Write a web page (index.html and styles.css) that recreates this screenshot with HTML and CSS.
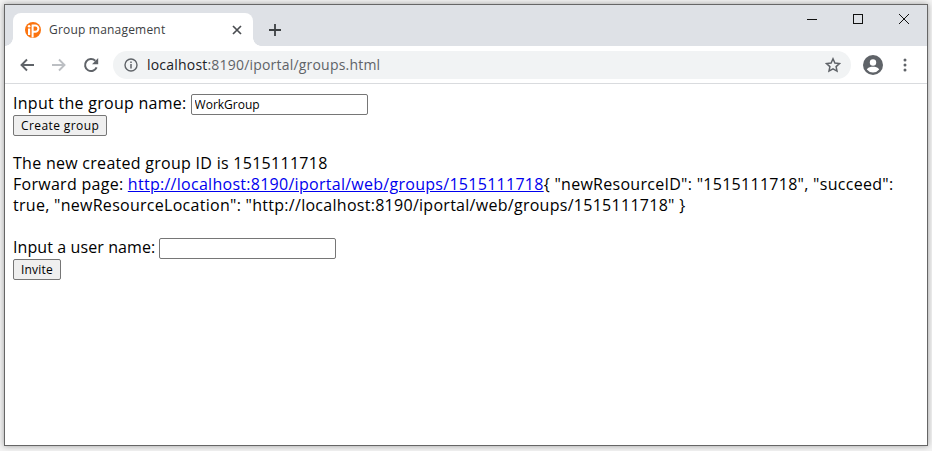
FILE: index.html
```html
<!DOCTYPE html>
<html lang="en">
<head>
<meta charset="utf-8">
<title>Group management</title>
<link rel="stylesheet" href="styles.css">
</head>
<body>
<div class="window">
  <div class="titlebar">
    <div class="tab">
      <svg class="favicon" width="16" height="16" viewBox="0 0 16 16"><circle cx="8" cy="8" r="8" fill="#fb7410"/><rect x="3" y="6.500" width="2.200" height="6.500" fill="#fff"/><circle cx="4.100" cy="4.200" r="1.300" fill="#fff"/><path d="M7.600 15.500V3.400h2.600a3.200 3.200 0 0 1 0 6.400H8.600" fill="none" stroke="#fff" stroke-width="2"/></svg>
      <span class="tab-title">Group management</span>
      <svg class="tab-close" width="10" height="10" viewBox="0 0 10 10"><path d="M1 1l8 8M9 1L1 9" stroke="#4a4d51" stroke-width="1.700"/></svg>
    </div>
    <svg class="new-tab" width="12" height="12" viewBox="0 0 12 12"><path d="M6 0v12M0 6h12" stroke="#3c4043" stroke-width="1.800"/></svg>
    <div class="win-controls">
      <span class="win-btn"><svg width="10" height="10" viewBox="0 0 10 10"><path d="M0 5.500h10" stroke="#111" stroke-width="1"/></svg></span>
      <span class="win-btn"><svg width="10" height="10" viewBox="0 0 10 10"><rect x=".5" y=".5" width="9" height="9" fill="none" stroke="#111"/></svg></span>
      <span class="win-btn"><svg width="10" height="10" viewBox="0 0 10 10"><path d="M0 0l10 10M10 0L0 10" stroke="#111" stroke-width="1"/></svg></span>
    </div>
  </div>
  <div class="toolbar">
    <svg class="nav" width="16" height="16" viewBox="0 0 16 16"><path d="M15 8H2.500M8 2.500L2.500 8 8 13.500" fill="none" stroke="#5f6368" stroke-width="1.900"/></svg>
    <svg class="nav" width="16" height="16" viewBox="0 0 16 16"><path d="M1 8h12.500M8 2.500L13.500 8 8 13.500" fill="none" stroke="#bcbfc3" stroke-width="1.900"/></svg>
    <svg class="nav" width="16" height="16" viewBox="0 0 16 16"><path d="M13.600 10.400A6 6 0 1 1 12.300 3.800" fill="none" stroke="#5f6368" stroke-width="2"/><path d="M15.200 1v6.200H9z" fill="#5f6368"/></svg>
    <div class="omnibox">
      <svg width="14" height="14" viewBox="0 0 14 14"><circle cx="7" cy="7" r="6" fill="none" stroke="#5f6368" stroke-width="1.400"/><path d="M7 6v4.400" stroke="#5f6368" stroke-width="1.500"/><path d="M7 3.400v1.500" stroke="#5f6368" stroke-width="1.500"/></svg>
      <span class="url"><span class="host">localhost</span>:8190/iportal/groups.html</span>
      <svg class="star" width="16" height="16" viewBox="0 0 16 16"><path d="M8 1.800l1.900 4.200 4.600.5-3.400 3.100.9 4.500L8 11.800l-4 2.300.9-4.500L1.500 6.500l4.600-.5z" fill="none" stroke="#5f6368" stroke-width="1.500"/></svg>
    </div>
    <svg class="avatar" width="20" height="20" viewBox="0 0 20 20"><circle cx="10" cy="10" r="10" fill="#5f6368"/><circle cx="10" cy="7.500" r="3.200" fill="#fff"/><path d="M3.800 14.500C5 12.300 8 11.800 10 11.800s5 .5 6.200 2.700A8 8 0 0 1 10 17.500a8 8 0 0 1-6.200-3z" fill="#fff"/></svg>
    <svg class="menu" width="4" height="14" viewBox="0 0 4 14"><circle cx="2" cy="2" r="1.500" fill="#5f6368"/><circle cx="2" cy="7" r="1.500" fill="#5f6368"/><circle cx="2" cy="12" r="1.500" fill="#5f6368"/></svg>
  </div>
  <main class="page">
    <div class="field"><label for="g">Input the group name:</label> <input id="g" class="text-input" type="text" value="WorkGroup"></div>
    <button class="btn" type="button">Create group</button>
    <p class="result">The new created group ID is 1515111718<br>Forward page: <a href="#">http://localhost:8190/iportal/web/groups/1515111718</a>{ "newResourceID": "1515111718", "succeed": true, "newResourceLocation": "http://localhost:8190/iportal/web/groups/1515111718" }</p>
    <div class="field field-tight"><label for="u">Input a user name:</label> <input id="u" class="text-input" type="text"></div>
    <button class="btn btn-tight" type="button">Invite</button>
  </main>
</div>
</body>
</html>
```
FILE: styles.css
```css
* { box-sizing: border-box; }
html, body { height: 100%; }
body {
  margin: 0;
  padding: 4px 4px 5px;
  background: #f3f3f3;
  font-family: "Open Sans", "Liberation Sans", sans-serif;
}
.window {
  height: 442px;
  border: 1px solid #666;
  background: #fff;
  display: flex;
  flex-direction: column;
  overflow: hidden;
  box-shadow: 0 0 6px rgba(0,0,0,.35);
}
.titlebar {
  height: 41px;
  flex: none;
  background: #dee1e6;
  display: flex;
  align-items: flex-end;
  padding-left: 8px;
}
.tab {
  position: relative;
  width: 240px;
  height: 33px;
  background: #fff;
  border-radius: 8px 8px 0 0;
  display: flex;
  align-items: center;
  padding: 0 12px;
}
.tab::before,
.tab::after {
  content: "";
  position: absolute;
  bottom: 0;
  width: 8px;
  height: 8px;
}
.tab::before {
  left: -8px;
  background: radial-gradient(circle at 0 0, #dee1e6 7.500px, #fff 8px);
}
.tab::after {
  right: -8px;
  background: radial-gradient(circle at 100% 0, #dee1e6 7.500px, #fff 8px);
}
.favicon { flex: none; }
.tab-title {
  margin-left: 8px;
  font-size: 12px;
  letter-spacing: .2px;
  color: #3c4043;
  flex: 1;
}
.tab-close { flex: none; margin-right: -1px; }
.new-tab { margin: 0 0 10px 16px; }
.win-controls {
  margin-left: auto;
  align-self: flex-start;
  display: flex;
}
.win-btn {
  width: 46px;
  height: 28px;
  display: flex;
  align-items: center;
  justify-content: center;
}
.toolbar {
  height: 38px;
  flex: none;
  background: #fff;
  border-bottom: 1px solid #d9dbde;
  display: flex;
  align-items: center;
  padding-left: 14px;
}
.nav { flex: none; margin-right: 16px; }
.omnibox {
  width: 738px;
  height: 28px;
  margin-left: -2px;
  border-radius: 14px;
  background: #f1f3f4;
  display: flex;
  align-items: center;
  padding: 0 10px 0 11px;
}
.url {
  margin-left: 9px;
  flex: 1;
  font-size: 14px;
  letter-spacing: .2px;
  color: #5f6368;
}
.host { color: #202124; }
.avatar { flex: none; margin-left: 12px; }
.menu { flex: none; margin-left: 20px; }
.page {
  flex: 1;
  padding: 8px;
  font-size: 16px;
  line-height: 21px;
  letter-spacing: .28px;
  color: #000;
}
.field { height: 23px; display: flex; align-items: flex-end; gap: 4px; }
.field label { align-self: center; }
.field-tight label { letter-spacing: .1px; }
.text-input {
  width: 177px;
  height: 21px;
  padding: 1px 3px;
  border: 1px solid #767676;
  border-radius: 2px;
  font: 12px "Open Sans", "Liberation Sans", sans-serif;
  color: #000;
  background: #fff;
}
.btn {
  display: block;
  height: 21px;
  padding: 0 7px;
  border: 1px solid #767676;
  border-radius: 2px;
  background: #efefef;
  font: 12px "Open Sans", "Liberation Sans", sans-serif;
  letter-spacing: .4px;
  color: #000;
}
.btn-tight { letter-spacing: .2px; }
.result { margin: 17px 0 20px; }
.result a { color: #0000ee; }
```
